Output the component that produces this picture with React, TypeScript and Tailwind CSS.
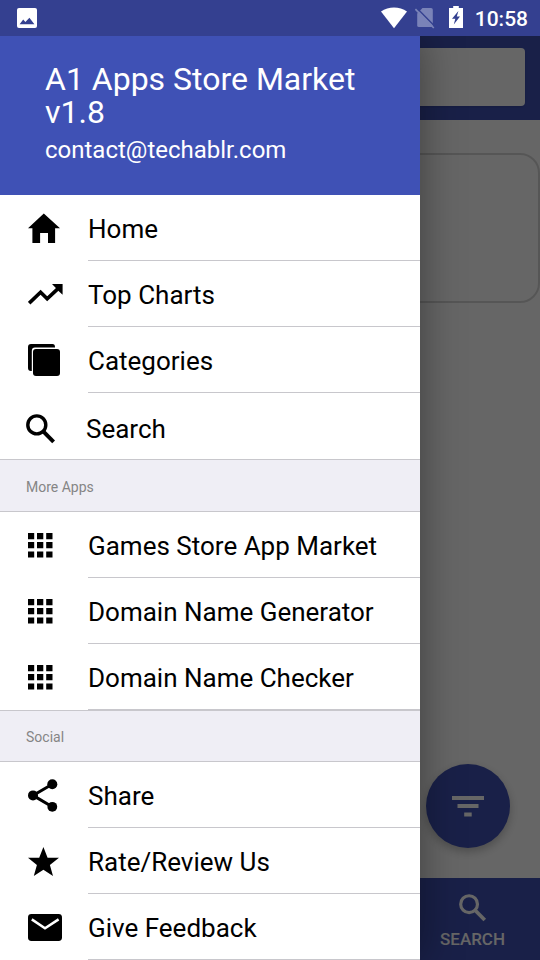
import type { ReactNode } from 'react';

const HomeIcon = () => (
  <svg width="32" height="30" viewBox="0 0 32 30" fill="currentColor" aria-hidden="true">
    <path d="M15.8 0.5L32 15.2H27.1V30H20V20H12.1V30H4.4V15.2H0z" />
  </svg>
);

const TrendingIcon = () => (
  <svg width="35" height="21" viewBox="0 0 35 21" fill="currentColor" aria-hidden="true">
    <path d="M1.2 19.2L12.6 8.2L19.2 14.8L30 4.6" fill="none" stroke="currentColor" strokeWidth="3.6" />
    <path d="M24 0H34.6V10.8L30.8 7.2L27.4 3.4z" />
  </svg>
);

const CategoriesIcon = () => (
  <svg width="32" height="32" viewBox="0 0 32 32" fill="currentColor" aria-hidden="true">
    <path d="M3 0H24.5Q27 0 27 3V3.6H7Q3.8 3.6 3.8 7V27H3Q0 27 0 24V3Q0 0 3 0z" />
    <rect x="5" y="5" width="27" height="27" rx="3" />
  </svg>
);

const SearchIcon = ({ size = 30 }: { size?: number }) => (
  <svg width={size} height={size} viewBox="0 0 30 30" fill="none" stroke="currentColor" aria-hidden="true">
    <circle cx="10.8" cy="10.9" r="9" strokeWidth="3.4" />
    <path d="M17 17.2L27.6 27.8" strokeWidth="4" />
  </svg>
);

const AppsIcon = () => (
  <svg width="25" height="25" viewBox="0 0 25 25" fill="currentColor" aria-hidden="true">
    <path d="M0 0h6.2v6.2H0zM9 0h6.3v6.2H9zM18.2 0h6.3v6.2h-6.3zM0 9.1h6.2v6.2H0zM9 9.1h6.3v6.2H9zM18.2 9.1h6.3v6.2h-6.3zM0 18.4h6.2v6.2H0zM9 18.4h6.3v6.2H9zM18.2 18.4h6.3v6.2h-6.3z" />
  </svg>
);

const ShareIcon = () => (
  <svg width="30" height="33" viewBox="0 0 30 33" fill="currentColor" aria-hidden="true">
    <path d="M24.2 5.2L5 16.4L24.2 27.8" fill="none" stroke="currentColor" strokeWidth="3" />
    <circle cx="24.3" cy="5.2" r="5" />
    <circle cx="5" cy="16.4" r="5" />
    <circle cx="24.3" cy="27.8" r="4.9" />
  </svg>
);

const StarIcon = () => (
  <svg width="31" height="29" viewBox="0 0 31 29" fill="currentColor" aria-hidden="true">
    <path d="M15.4 0L19.6 10.8H31L21.9 18L25 29L15.4 22.8L5.8 29L8.9 18L0 10.8H11.2z" />
  </svg>
);

const MailIcon = () => (
  <svg width="34" height="27" viewBox="0 0 34 27" fill="none" aria-hidden="true">
    <rect width="34" height="27" rx="3.4" fill="currentColor" />
    <path d="M3.8 5.4L17 14.2L30.6 5.4" stroke="#fff" strokeWidth="2.5" />
  </svg>
);

const FilterIcon = () => (
  <svg width="32" height="22" viewBox="0 0 32 22" fill="currentColor" aria-hidden="true">
    <path d="M0 1h32v4H0zM5.5 9h21v4h-21zM12.2 17.5h7.5v4h-7.5z" />
  </svg>
);

const ImageIcon = () => (
  <svg width="20" height="20" viewBox="0 0 20 20" aria-hidden="true">
    <rect width="20" height="20" rx="2" fill="#fff" />
    <path d="M2.6 16.2L6.2 11.6L8.4 14L12.4 9.8L17.4 16.2z" fill="#344090" />
  </svg>
);

const WifiIcon = () => (
  <svg width="26" height="22" viewBox="0 0 26 22" fill="#fff" aria-hidden="true">
    <path d="M13 21.2L0 4.6C7.5-1 18.5-1 26 4.6z" />
  </svg>
);

const NoSimIcon = () => (
  <svg width="20" height="22" viewBox="0 0 20 22" aria-hidden="true">
    <path d="M7.5 1H16Q17.8 1 17.8 2.8V18.5Q17.8 20 16 20H4Q2.2 20 2.2 18.5V6.5z" fill="#7a83b8" />
    <path d="M2 1.2L20 19.6" stroke="#344090" strokeWidth="1.4" />
    <path d="M0.4 2.2L18.8 21" stroke="#7a83b8" strokeWidth="1.7" />
  </svg>
);

const BatteryIcon = () => (
  <svg width="14" height="22" viewBox="0 0 14 22" aria-hidden="true">
    <path d="M4.2 0h5.6v2H14v20H0V2h4.2z" fill="#fff" />
    <path d="M9.4 5L3 12.8H6.3L4.8 18.6L11 10.6H7.8z" fill="#344090" />
  </svg>
);

type Item = { name: string; href: string; icon: ReactNode };

const mainItems: Item[] = [
  { name: 'Home', href: '#home', icon: <HomeIcon /> },
  { name: 'Top Charts', href: '#charts', icon: <TrendingIcon /> },
  { name: 'Categories', href: '#categories', icon: <CategoriesIcon /> },
];

const moreApps: Item[] = [
  { name: 'Games Store App Market', href: '#games', icon: <AppsIcon /> },
  { name: 'Domain Name Generator', href: '#generator', icon: <AppsIcon /> },
  { name: 'Domain Name Checker', href: '#checker', icon: <AppsIcon /> },
];

const socialItems: Item[] = [
  { name: 'Share', href: '#share', icon: <ShareIcon /> },
  { name: 'Rate/Review Us', href: '#rate', icon: <StarIcon /> },
  { name: 'Give Feedback', href: '#feedback', icon: <MailIcon /> },
];

function MenuItem({ name, href, icon }: Item) {
  return (
    <a href={href} className="flex h-[66px] items-center pl-7">
      <span className="w-15 shrink-0">{icon}</span>
      <span className="flex h-full flex-1 items-center whitespace-nowrap border-b border-[#c8c7cc] pt-1">{name}</span>
    </a>
  );
}

function Divider({ title, height = 'h-13' }: { title: string; height?: string }) {
  return (
    <h2 className={`${height} flex items-center border-y border-[#c8c7cc] bg-[#efeef5] pl-6.5 pt-0.5 text-sm text-[#858585]`}>
      {title}
    </h2>
  );
}

function StatusBar() {
  return (
    <header className="flex h-9 items-center bg-[#344090] pl-[17px] pr-3 text-white">
      <ImageIcon />
      <div className="ml-auto flex items-center">
        <WifiIcon />
        <span className="ml-2 pb-px"><NoSimIcon /></span>
        <span className="ml-3.5 pb-0.5"><BatteryIcon /></span>
        <span className="ml-3 pt-0.5 text-[21px] font-medium leading-6">10:58</span>
      </div>
    </header>
  );
}

function StorePage() {
  return (
    <main className="flex flex-1 flex-col bg-white">
      <div className="flex h-21 bg-[#3f51b5] px-[15px] py-3">
        <input
          type="text"
          aria-label="Search apps"
          className="h-[58px] w-full rounded-sm bg-white px-4 shadow-sm outline-none"
        />
      </div>
      <div className="mt-[33px] h-[150px] rounded-[20px] border-2 border-[#d8d8d8]" />
      <nav className="mt-auto flex h-[82px] justify-end bg-[#3f51b5] text-white">
        <a href="#search" className="flex w-1/4 flex-col items-center pt-4">
          <SearchIcon size={28} />
          <span className="mt-[5px] text-[17px] font-medium leading-6">SEARCH</span>
        </a>
      </nav>
      <button
        type="button"
        aria-label="Filter"
        className="absolute bottom-28 right-7.5 flex size-21 items-center justify-center rounded-full bg-[#3f51b5] text-white shadow-[0_4px_10px_rgba(0,0,0,0.25)]"
      >
        <FilterIcon />
      </button>
    </main>
  );
}

function Drawer() {
  return (
    <aside className="absolute inset-y-0 left-0 w-full max-w-[420px] bg-white text-[26px] text-black shadow-[0_0_40px_rgba(0,0,0,0.4)]">
      <div className="h-[159px] bg-[#3f51b5] px-[45px] pt-[27px] text-white">
        <h1 className="text-[32px] leading-[33px]">A1 Apps Store Market v1.8</h1>
        <p className="pt-[5px] text-2xl leading-8">contact@techablr.com</p>
      </div>
      <nav>
        {mainItems.map((item) => (
          <MenuItem key={item.name} {...item} />
        ))}
        <a href="#search" className="flex h-[66px] items-center pl-6.5 pt-1.5">
          <span className="w-15 shrink-0"><SearchIcon /></span>
          Search
        </a>
        <Divider title="More Apps" height="h-[53px]" />
        {moreApps.map((item) => (
          <MenuItem key={item.name} {...item} />
        ))}
        <Divider title="Social" />
        {socialItems.map((item) => (
          <MenuItem key={item.name} {...item} />
        ))}
      </nav>
    </aside>
  );
}

export default function App() {
  return (
    <div className="flex min-h-screen flex-col font-[Roboto,sans-serif]">
      <StatusBar />
      <div className="relative flex flex-1 flex-col overflow-hidden">
        <StorePage />
        {/* Backdrop */}
        <div className="absolute inset-0 bg-black/60" />
        <Drawer />
      </div>
    </div>
  );
}
